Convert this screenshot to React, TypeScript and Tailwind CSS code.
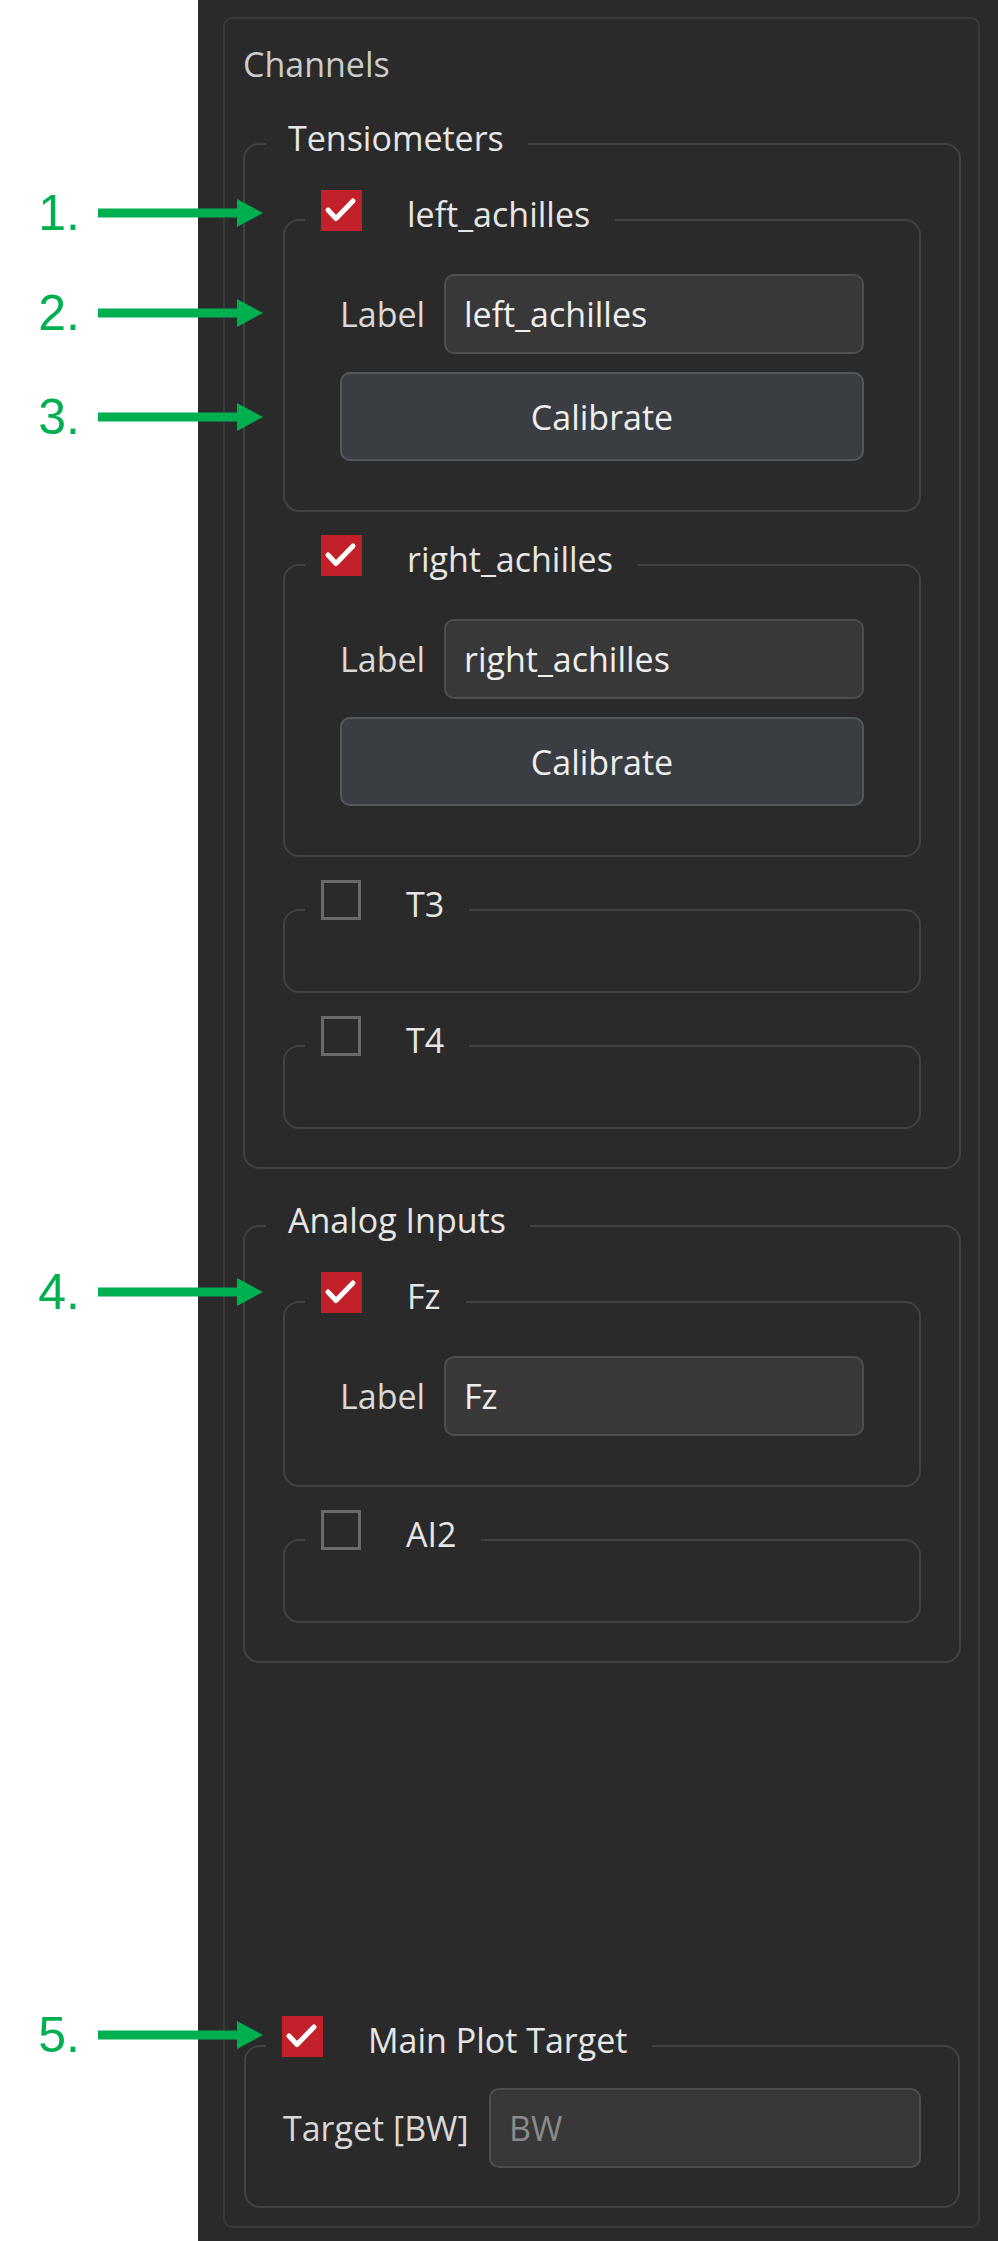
import React from "react";

const PANEL = "bg-[#2a2a2a]";

function CheckBox({ checked }: { checked: boolean }) {
  if (!checked) {
    return (
      <div className="mb-[8px] h-[40px] w-[40px] shrink-0 border-[3px] border-[#6b6b6b]" />
    );
  }
  return (
    <div className="mb-[8px] flex h-[41px] w-[41px] shrink-0 items-center justify-center bg-[#c3212a]">
      <svg width="41" height="41" viewBox="0 0 41 41">
        <polyline
          points="7,20 15,28.5 32,11"
          fill="none"
          stroke="#ffffff"
          strokeWidth="5"
          strokeLinecap="round"
          strokeLinejoin="round"
        />
      </svg>
    </div>
  );
}

function Legend({ title, checked }: { title: string; checked?: boolean }) {
  if (checked === undefined) {
    return (
      <div
        className={`-mt-[27px] ml-[21px] flex h-[40px] w-fit items-center pl-[22px] pr-[24px] ${PANEL}`}
      >
        <span className="whitespace-nowrap text-[34px] leading-[40px] text-[#e6e6e6]">
          {title}
        </span>
      </div>
    );
  }
  return (
    <div
      className={`-mt-[27px] ml-[20px] flex h-[40px] w-fit items-center pl-[16px] pr-[25px] ${PANEL}`}
    >
      <CheckBox checked={checked} />
      <span className="ml-[45px] whitespace-nowrap text-[34px] leading-[40px] text-[#e6e6e6]">
        {title}
      </span>
    </div>
  );
}

function Field({
  label,
  value,
  labelWidth,
  placeholder = false,
}: {
  label: string;
  value: string;
  labelWidth: string;
  placeholder?: boolean;
}) {
  return (
    <div className="flex items-center">
      <span
        className={`${labelWidth} shrink-0 whitespace-nowrap text-[34px] leading-[40px] text-[#d9d9d9]`}
      >
        {label}
      </span>
      <div className="flex h-[80px] flex-1 items-center rounded-[10px] border-2 border-[#4e4e4e] bg-[#383838] pl-[18px]">
        <span
          className={`text-[34px] leading-[40px] ${placeholder ? "text-[#8a8a8a]" : "text-[#efefef]"}`}
        >
          {value}
        </span>
      </div>
    </div>
  );
}

function Channel({
  name,
  checked,
  calibrate = false,
}: {
  name: string;
  checked: boolean;
  calibrate?: boolean;
}) {
  return (
    <div className="rounded-[16px] border-2 border-[#424242]">
      <Legend title={name} checked={checked} />
      {checked ? (
        <div className="px-[55px] pb-[49px] pt-[40px]">
          <Field label="Label" value={name} labelWidth="w-[104px]" />
          {calibrate && (
            <button className="mt-[18px] flex h-[89px] w-full items-center justify-center rounded-[10px] border-2 border-[#55585b] bg-[#3a3d41] text-[34px] leading-[40px] text-[#efefef]">
              Calibrate
            </button>
          )}
        </div>
      ) : (
        <div className="h-[67px]" />
      )}
    </div>
  );
}

function Section({ title, children }: { title: string; children: React.ReactNode }) {
  return (
    <div className="rounded-[16px] border-2 border-[#424242]">
      <Legend title={title} />
      <div className="flex flex-col gap-[52px] px-[38px] pb-[38px] pt-[61px]">{children}</div>
    </div>
  );
}

function Callout({ n, top }: { n: string; top: number }) {
  return (
    <div className="absolute left-0 flex h-[50px] items-center" style={{ top: top - 25 }}>
      <span className="w-[80px] text-right font-['Liberation_Sans',Arial,sans-serif] text-[50px] leading-[50px] text-[#00b050]">
        {n}
      </span>
      <svg className="ml-[18px]" width="165" height="28" viewBox="0 0 165 28">
        <rect x="0" y="9.5" width="140" height="9" fill="#00b050" />
        <polygon points="139,0 165,14 139,28" fill="#00b050" />
      </svg>
    </div>
  );
}

export default function App() {
  return (
    <div className="relative flex h-[2241px] w-[998px] bg-white font-['Open_Sans',sans-serif]">
      <div className="w-[198px] shrink-0" />
      <div className={`flex-1 pb-[13px] pl-[25px] pr-[18px] pt-[17px] ${PANEL}`}>
        <div className="flex h-full flex-col rounded-[9px] border-2 border-[#393939] pb-[18px] pl-[18px] pr-[17px] pt-[25px]">
          <span className="text-[34px] leading-[40px] text-[#cccccc]">Channels</span>

          <div className="mt-[59px]">
            <Section title="Tensiometers">
              <Channel name="left_achilles" checked calibrate />
              <Channel name="right_achilles" checked calibrate />
              <Channel name="T3" checked={false} />
              <Channel name="T4" checked={false} />
            </Section>
          </div>

          <div className="mt-[56px]">
            <Section title="Analog Inputs">
              <Channel name="Fz" checked />
              <Channel name="AI2" checked={false} />
            </Section>
          </div>

          <div className="flex-1" />

          <div className="mx-[1px] rounded-[16px] border-2 border-[#424242]">
            <Legend title="Main Plot Target" checked />
            <div className="px-[37px] pb-[38px] pt-[28px]">
              <Field label="Target [BW]" value="BW" labelWidth="w-[206px]" placeholder />
            </div>
          </div>
        </div>
      </div>

      <Callout n="1." top={213} />
      <Callout n="2." top={313} />
      <Callout n="3." top={417} />
      <Callout n="4." top={1292} />
      <Callout n="5." top={2035} />
    </div>
  );
}
